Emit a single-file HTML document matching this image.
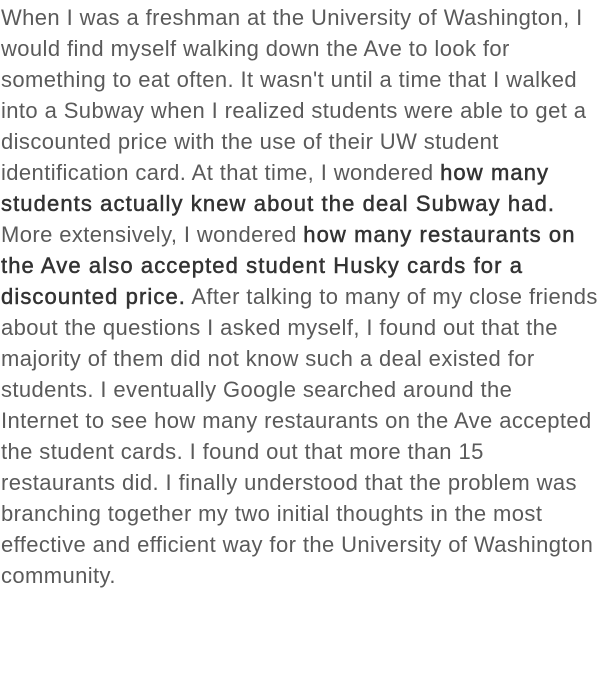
<!DOCTYPE html>
<html><head><meta charset="utf-8"><style>
html,body{margin:0;padding:0;background:#fff;width:610px;height:695px;overflow:hidden}
.t{position:absolute;left:1px;top:2px;font-family:"Liberation Sans",sans-serif;font-size:22px;line-height:31px;color:#5a5a5a;letter-spacing:0.4px}
.t div{white-space:nowrap}
b{color:#333;font-weight:normal;-webkit-text-stroke:0.5px #333;letter-spacing:1.1px}
</style></head><body><div class="t">
<div>When I was a freshman at the University of Washington, I</div>
<div>would find myself walking down the Ave to look for</div>
<div>something to eat often. It wasn't until a time that I walked</div>
<div>into a Subway when I realized students were able to get a</div>
<div>discounted price with the use of their UW student</div>
<div>identification card. At that time, I wondered <b>how many</b></div>
<div><b>students actually knew about the deal Subway had.</b></div>
<div>More extensively, I wondered <b>how many restaurants on</b></div>
<div><b>the Ave also accepted student Husky cards for a</b></div>
<div><b>discounted price.</b> After talking to many of my close friends</div>
<div>about the questions I asked myself, I found out that the</div>
<div>majority of them did not know such a deal existed for</div>
<div>students. I eventually Google searched around the</div>
<div>Internet to see how many restaurants on the Ave accepted</div>
<div>the student cards. I found out that more than 15</div>
<div>restaurants did. I finally understood that the problem was</div>
<div>branching together my two initial thoughts in the most</div>
<div>effective and efficient way for the University of Washington</div>
<div>community.</div>
</div></body></html>
